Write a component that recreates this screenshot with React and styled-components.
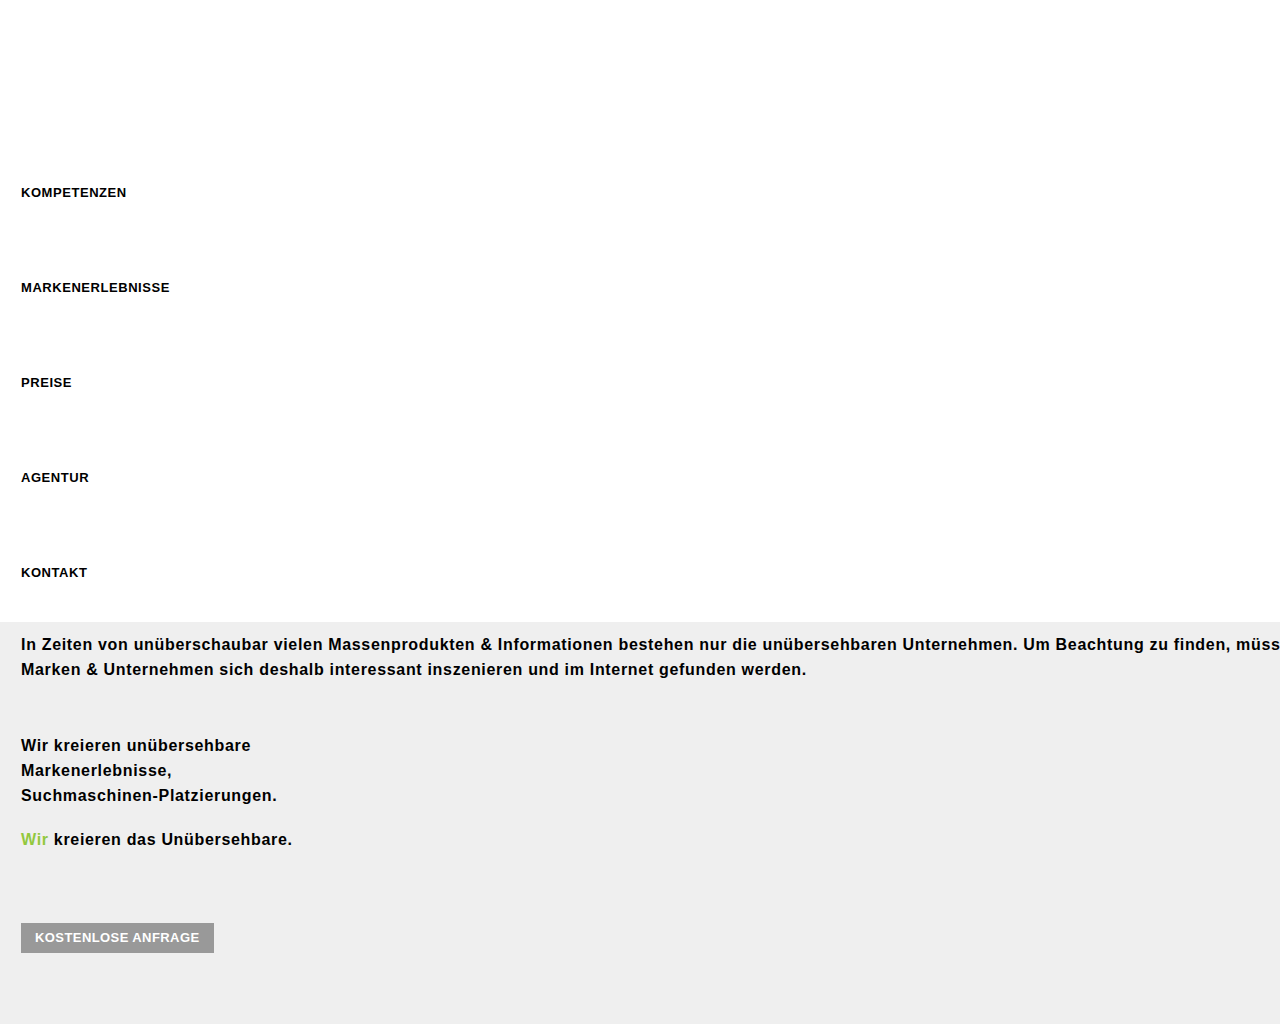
import React from "react";
import styled, { createGlobalStyle } from "styled-components";

const Global = createGlobalStyle`
  html, body { margin: 0; padding: 0; overflow-x: hidden; background: #efefef; }
  body { font-family: "Liberation Sans", Arial, sans-serif; color: #000; }
`;

const Header = styled.header`
  background: #fff;
  padding-top: 185px;
  height: 622px;
  box-sizing: border-box;
`;

const Nav = styled.nav`
  display: flex;
  flex-direction: column;
  gap: 80px;
  padding-left: 21px;
`;

const NavLink = styled.a`
  display: block;
  font-size: 13px;
  line-height: 15px;
  font-weight: 700;
  color: #000;
  text-decoration: none;
  text-transform: uppercase;
  letter-spacing: 0.55px;
`;

const Main = styled.main`
  background: #efefef;
  padding: 10px 0 71px 21px;
  min-height: 402px;
  box-sizing: border-box;
`;

const Text = styled.p`
  margin: 0 0 ${(p) => p.$mb || 0}px;
  font-size: 16px;
  line-height: 25px;
  font-weight: 700;
  letter-spacing: 0.68px;
  white-space: nowrap;
`;

const Green = styled.span`
  color: #92c83e;
`;

const Button = styled.a`
  display: inline-block;
  background: #999;
  color: #fff;
  font-size: 13px;
  font-weight: 700;
  line-height: 30px;
  padding: 0 14px;
  text-decoration: none;
  text-transform: uppercase;
  letter-spacing: 0.42px;
`;

const items = ["Kompetenzen", "Markenerlebnisse", "Preise", "Agentur", "Kontakt"];

export default function App() {
  return (
    <>
      <Global />
      <Header>
        <Nav>
          {items.map((i) => (
            <NavLink key={i} href="#">{i}</NavLink>
          ))}
        </Nav>
      </Header>
      <Main>
        <Text $mb={51}>
          In Zeiten von unüberschaubar vielen Massenprodukten &amp; Informationen bestehen nur die unübersehbaren Unternehmen. Um Beachtung zu finden, müssen
          <br />
          Marken &amp; Unternehmen sich deshalb interessant inszenieren und im Internet gefunden werden.
        </Text>
        <Text $mb={19}>
          Wir kreieren unübersehbare
          <br />
          Markenerlebnisse,
          <br />
          Suchmaschinen-Platzierungen.
        </Text>
        <Text $mb={71}>
          <Green>Wir</Green> kreieren das Unübersehbare.
        </Text>
        <Button href="#">Kostenlose Anfrage</Button>
      </Main>
    </>
  );
}
